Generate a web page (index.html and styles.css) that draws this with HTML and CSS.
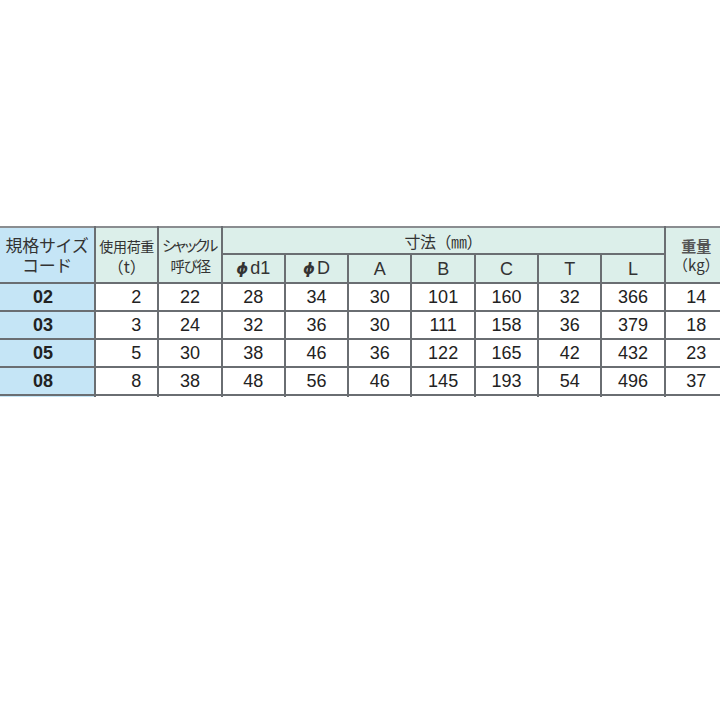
FILE: index.html
```html
<!DOCTYPE html>
<html lang="ja">
<head>
<meta charset="utf-8">
<link rel="stylesheet" href="styles.css">
</head>
<body>
<div class="frame">
<table class="spec">
<colgroup>
<col class="c-code"><col class="c-n"><col class="c-n"><col class="c-n"><col class="c-n"><col class="c-n"><col class="c-n"><col class="c-n"><col class="c-n"><col class="c-n"><col class="c-n">
</colgroup>
<thead>
<tr class="h1">
<th rowspan="2" class="code-h"><span class="big">規格サイズ</span><br><span class="big">コード</span></th>
<th rowspan="2" class="mint"><span class="mid">使用荷重</span><br><span class="mid2">（t）</span></th>
<th rowspan="2" class="mint"><span class="cond">シャックル</span><br><span class="cond2">呼び径</span></th>
<th colspan="7" class="mint dim">寸法（㎜）</th>
<th rowspan="2" class="mint wt"><span class="bold">重量</span><br>（kg）</th>
</tr>
<tr class="h2">
<th class="mint lat"><i class="phi">ϕ</i>d1</th>
<th class="mint lat"><i class="phi">ϕ</i>D</th>
<th class="mint lat">A</th>
<th class="mint lat">B</th>
<th class="mint lat">C</th>
<th class="mint lat">T</th>
<th class="mint lat">L</th>
</tr>
</thead>
<tbody>
<tr><td class="code">02</td><td class="r">2</td><td>22</td><td>28</td><td>34</td><td>30</td><td>101</td><td>160</td><td>32</td><td>366</td><td>14</td></tr>
<tr><td class="code">03</td><td class="r">3</td><td>24</td><td>32</td><td>36</td><td>30</td><td>111</td><td>158</td><td>36</td><td>379</td><td>18</td></tr>
<tr><td class="code">05</td><td class="r">5</td><td>30</td><td>38</td><td>46</td><td>36</td><td>122</td><td>165</td><td>42</td><td>432</td><td>23</td></tr>
<tr><td class="code">08</td><td class="r">8</td><td>38</td><td>48</td><td>56</td><td>46</td><td>145</td><td>193</td><td>54</td><td>496</td><td>37</td></tr>
<tr class="tail"><td class="code"></td><td></td><td></td><td></td><td></td><td></td><td></td><td></td><td></td><td></td><td></td></tr>
</tbody>
</table>
</div>
</body>
</html>
```
FILE: styles.css
```css
html, body {
  margin: 0;
  padding: 0;
  background: #ffffff;
}
.frame {
  margin-top: 226px;
  width: 720px;
  height: 171px;
  overflow: hidden;
}
.spec {
  border-collapse: collapse;
  table-layout: fixed;
  width: 728px;
  font-family: "Liberation Sans", Arial, "Noto Sans CJK JP", sans-serif;
  color: #222;
}
.c-code { width: 95px; }
.c-n { width: 63.3px; }
.spec th, .spec td {
  border: 2px solid #6a6e72;
  padding: 0;
  text-align: center;
  vertical-align: middle;
}
.spec thead tr:first-child th { border-top: 2px solid #8a8d90; }
.spec th:first-child, .spec td:first-child { border-left: none; }
.h1 { height: 27px; }
.h2 { height: 29px; }
.spec tbody tr { height: 28px; }
.code-h {
  background: #c5e5f6;
  font-family: "Noto Sans CJK JP", sans-serif;
  font-weight: normal;
  color: #333;
  line-height: 20px;
}
.big { font-size: 17px; letter-spacing: -0.3px; }
.mint {
  background: #dcefea;
  font-family: "Noto Sans CJK JP", sans-serif;
  font-weight: normal;
  color: #333;
  line-height: 20px;
}
.mid { font-size: 14px; letter-spacing: -0.3px; }
.mid2 { font-size: 16px; }
.cond {
  display: inline-block;
  font-size: 15px;
  letter-spacing: -4.5px;
  margin-right: 4px;
}
.cond2 {
  display: inline-block;
  font-size: 14.5px;
  letter-spacing: -1.5px;
}
.dim { font-size: 16px; padding-top: 2px; letter-spacing: -0.5px; }
.wt { font-size: 15px; line-height: 19px; }
.bold { font-weight: bold; color: #555; }
.lat {
  font-family: "Liberation Sans", Arial, sans-serif;
  font-size: 18px;
}
.phi {
  font-family: "DejaVu Sans", sans-serif;
  font-weight: bold;
  font-size: 15px;
  margin-right: 2px;
}
.spec td {
  font-size: 18px;
  background: #fff;
}
.spec td.code {
  background: #c5e5f6;
  font-weight: bold;
  padding-right: 8px;
}
.spec td.r { text-align: right; padding-right: 16px; }
```
